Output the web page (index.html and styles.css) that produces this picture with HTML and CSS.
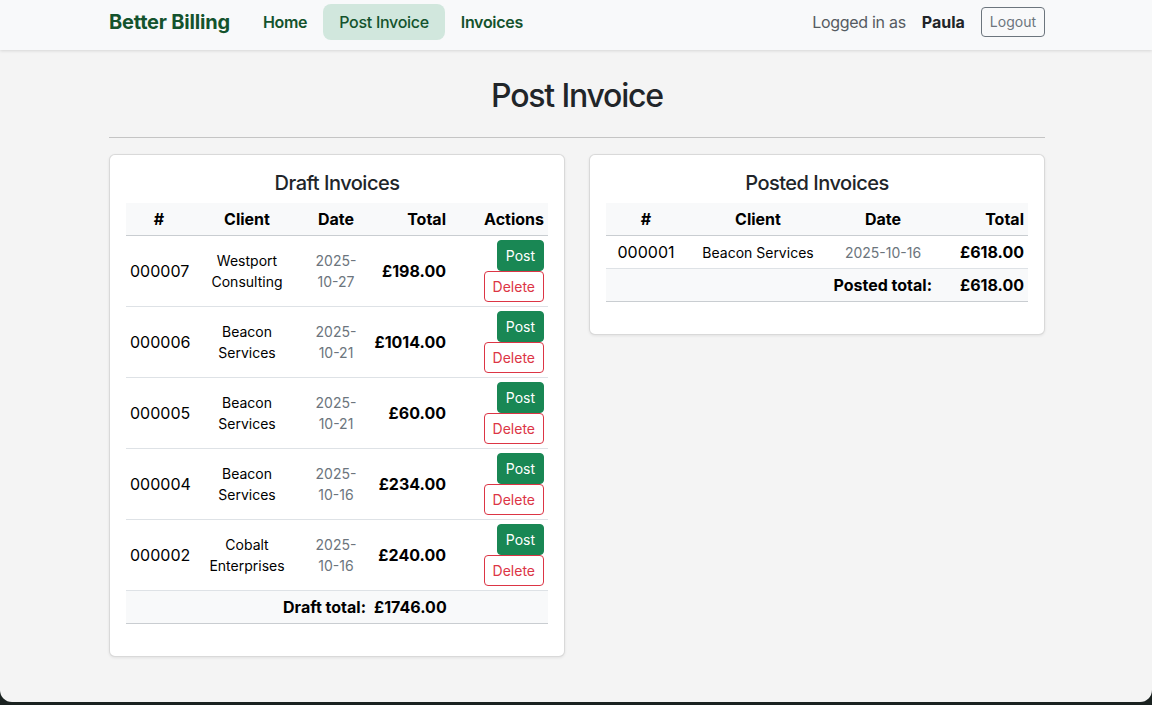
FILE: index.html
```html
<!DOCTYPE html>
<html lang="en">
<head>
<meta charset="utf-8">
<title>Post Invoice - Better Billing</title>
<link rel="stylesheet" href="styles.css">
</head>
<body>
<div class="window">
  <nav class="navbar">
    <div class="container nav-inner">
      <a class="brand" href="#">Better Billing</a>
      <ul class="nav-links">
        <li><a class="nav-link" href="#">Home</a></li>
        <li><a class="nav-link active" href="#">Post Invoice</a></li>
        <li><a class="nav-link" href="#">Invoices</a></li>
      </ul>
      <div class="nav-user">
        <span class="logged">Logged in as</span>
        <span class="user">Paula</span>
        <button class="btn btn-logout">Logout</button>
      </div>
    </div>
  </nav>

  <main class="container main">
    <h1 class="page-title">Post Invoice</h1>
    <hr class="divider">
    <div class="cards">
      <section class="card">
        <h5 class="card-title">Draft Invoices</h5>
        <table class="tbl">
          <colgroup>
            <col class="d-c1"><col class="d-c2"><col class="d-c3"><col class="d-c4"><col class="d-c5">
          </colgroup>
          <thead>
            <tr><th class="c">#</th><th class="c">Client</th><th class="c">Date</th><th class="r">Total</th><th class="r">Actions</th></tr>
          </thead>
          <tbody>
            <tr>
              <td class="c">000007</td><td class="c client">Westport Consulting</td><td class="c date">2025-10-27</td><td class="r amt">£198.00</td>
              <td class="r"><div class="actions"><button class="btn btn-post">Post</button><button class="btn btn-del">Delete</button></div></td>
            </tr>
            <tr>
              <td class="c">000006</td><td class="c client">Beacon Services</td><td class="c date">2025-10-21</td><td class="r amt">£1014.00</td>
              <td class="r"><div class="actions"><button class="btn btn-post">Post</button><button class="btn btn-del">Delete</button></div></td>
            </tr>
            <tr>
              <td class="c">000005</td><td class="c client">Beacon Services</td><td class="c date">2025-10-21</td><td class="r amt">£60.00</td>
              <td class="r"><div class="actions"><button class="btn btn-post">Post</button><button class="btn btn-del">Delete</button></div></td>
            </tr>
            <tr>
              <td class="c">000004</td><td class="c client">Beacon Services</td><td class="c date">2025-10-16</td><td class="r amt">£234.00</td>
              <td class="r"><div class="actions"><button class="btn btn-post">Post</button><button class="btn btn-del">Delete</button></div></td>
            </tr>
            <tr>
              <td class="c">000002</td><td class="c client">Cobalt Enterprises</td><td class="c date">2025-10-16</td><td class="r amt">£240.00</td>
              <td class="r"><div class="actions"><button class="btn btn-post">Post</button><button class="btn btn-del">Delete</button></div></td>
            </tr>
          </tbody>
          <tfoot>
            <tr><td colspan="3" class="r amt">Draft total:</td><td class="r amt">£1746.00</td><td></td></tr>
          </tfoot>
        </table>
      </section>

      <section class="card">
        <h5 class="card-title">Posted Invoices</h5>
        <table class="tbl">
          <colgroup>
            <col class="p-c1"><col class="p-c2"><col class="p-c3"><col class="p-c4">
          </colgroup>
          <thead>
            <tr><th class="c">#</th><th class="c">Client</th><th class="c">Date</th><th class="r">Total</th></tr>
          </thead>
          <tbody>
            <tr><td class="c">000001</td><td class="c client">Beacon Services</td><td class="c date">2025-10-16</td><td class="r amt">£618.00</td></tr>
          </tbody>
          <tfoot>
            <tr><td colspan="3" class="r amt">Posted total:</td><td class="r amt">£618.00</td></tr>
          </tfoot>
        </table>
      </section>
    </div>
  </main>
</div>
</body>
</html>
```

FILE: styles.css
```css
* { box-sizing: border-box; }

html {
  background: #1a2220;
}

body {
  margin: 0;
  font-family: Inter, "Liberation Sans", sans-serif;
  font-size: 16px;
  line-height: 1.5;
  color: #212529;
}

.window {
  min-height: calc(100vh - 3px);
  background: #f4f4f4;
  border-radius: 0 0 12px 12px;
  overflow: hidden;
}

.container {
  width: 960px;
  margin: 0 auto;
  padding: 0 11px 0 13px;
}

/* Navbar */
.navbar {
  background: #f8f9fa;
  height: 50px;
  box-shadow: 0 1px 3px rgba(0, 0, 0, 0.12);
  position: relative;
}

.nav-inner {
  display: flex;
  align-items: center;
  padding-top: 4px;
  padding-bottom: 10px;
}

.brand {
  font-size: 20px;
  font-weight: 700;
  color: #14532d;
  text-decoration: none;
  margin-right: 17px;
  letter-spacing: -0.2px;
}

.nav-links {
  display: flex;
  list-style: none;
  margin: 0;
  padding: 0;
}

.nav-link {
  display: block;
  padding: 6px 16px;
  font-weight: 600;
  color: #14532d;
  text-decoration: none;
  border-radius: 8px;
  letter-spacing: -0.3px;
}

.nav-link.active {
  background: #d1e7dd;
  font-weight: 500;
}

.nav-user {
  margin-left: auto;
  display: flex;
  align-items: center;
}

.logged {
  color: #555b61;
  letter-spacing: -0.3px;
}

.user {
  font-weight: 700;
  margin-left: 16px;
  color: #212529;
}

.btn {
  font-family: inherit;
  font-size: 14px;
  line-height: 21px;
  padding: 4px 8px;
  border-radius: 4px;
  border: 1px solid transparent;
  cursor: pointer;
}

.btn-logout {
  margin-left: 16px;
  background: transparent;
  border-color: #6c757d;
  color: #6c757d;
  line-height: 20px;
}

/* Main */
.main {
  padding-top: 27px;
}

.page-title {
  margin: 0 0 22px;
  text-align: center;
  font-size: 32px;
  font-weight: 500;
  line-height: 1.2;
  letter-spacing: -1.2px;
}

.divider {
  margin: 0 0 16px;
  border: 0;
  border-top: 1px solid #c4c4c4;
}

.cards {
  display: grid;
  grid-template-columns: 1fr 1fr;
  gap: 24px;
  align-items: start;
}

.card {
  background: #fff;
  border: 1px solid rgba(0, 0, 0, 0.15);
  border-radius: 6px;
  box-shadow: 0 1px 3px rgba(0, 0, 0, 0.08);
  padding: 16px;
}

.card-title {
  margin: 0 0 8px;
  text-align: center;
  font-size: 20px;
  font-weight: 500;
  line-height: 1.2;
  letter-spacing: -0.5px;
}

/* Tables */
.tbl {
  width: 100%;
  table-layout: fixed;
  border-collapse: collapse;
  margin-bottom: 16px;
  color: #000;
}

.tbl th,
.tbl td {
  padding: 4px;
  vertical-align: middle;
  border-bottom: 1px solid #dee2e6;
}

.tbl thead th {
  background: #f8f9fa;
  font-weight: 700;
  border-bottom-color: #c9cdd1;
}

.tbl tfoot td {
  background: #f8f9fa;
  border-bottom-color: #c9cdd1;
}

.c { text-align: center; }
.r { text-align: right; }

.client {
  font-size: 14px;
}

.date {
  font-size: 14px;
  color: #6c757d;
}

.amt {
  font-weight: 700;
}

.d-c1 { width: 66px; }
.d-c2 { width: 110px; }
.d-c3 { width: 68px; }
.d-c4 { width: 80px; }
.d-c5 { width: 98px; }

.p-c1 { width: 80px; }
.p-c2 { width: 144px; }
.p-c3 { width: 106px; }
.p-c4 { width: 92px; }

.actions {
  display: flex;
  flex-direction: column;
  align-items: flex-end;
}

.btn-post {
  background: #198754;
  color: #fff;
  border-color: #198754;
}

.btn-del {
  background: #fff;
  color: #dc3545;
  border-color: #dc3545;
}
```
